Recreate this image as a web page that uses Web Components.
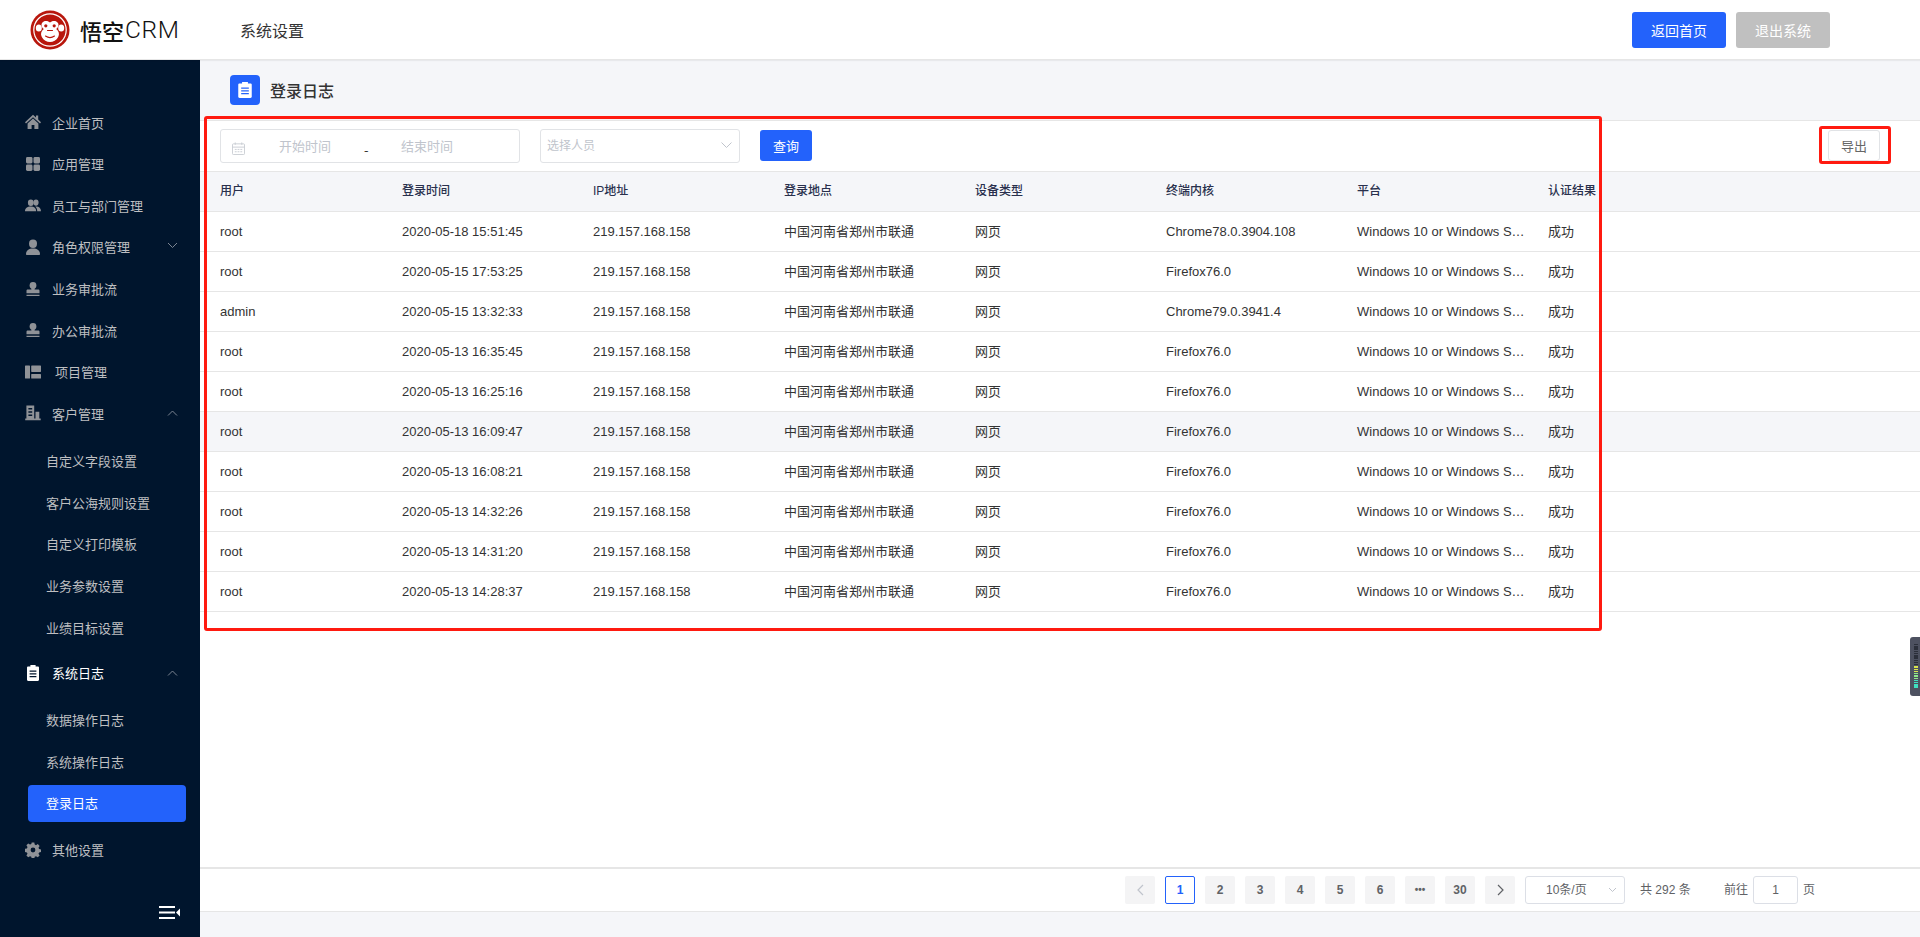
<!DOCTYPE html>
<html lang="zh">
<head>
<meta charset="utf-8">
<title>登录日志</title>
<style>
  html, body { margin: 0; height: 100%; }
  body { font-family: "Liberation Sans", "Noto Sans CJK SC", sans-serif; color: #333; background: #f5f6f9; overflow: hidden; }
</style>
</head>
<body>
<crm-app></crm-app>
<script>
const ICONS = {
  home: '<path d="M8 .8 0 8.200 1 9.400 8 3.200 15 9.400 16 8.200 13.200 5.600V1.600h-2.200v2zM2.600 9.400V15h4V11h2.800v4h4V9.400L8 4.600z"/>',
  grid: '<rect x="1" y="1" width="6.500" height="6.500" rx="1.400"/><rect x="8.500" y="1" width="6.500" height="6.500" rx="1.400"/><rect x="1" y="8.500" width="6.500" height="6.500" rx="1.400"/><rect x="8.500" y="8.500" width="6.500" height="6.500" rx="1.400"/>',
  users: '<ellipse cx="5.800" cy="5.800" rx="2.900" ry="3.300"/><ellipse cx="11" cy="5.600" rx="2.600" ry="3.100"/><path d="M0 14.200c0-3 2.200-4.800 5.800-4.800s5.400 1.800 5.400 4.800zM12.200 14.200c0-1.900-.7-3.500-2-4.600 3.400-.6 5.800 1.500 5.800 4.600z"/>',
  user: '<ellipse cx="8" cy="4.800" rx="4" ry="4.200"/><path d="M1 15c0-3.700 2.900-5.600 7-5.600s7 1.900 7 5.600c0 .6-.4 1-1 1H2c-.6 0-1-.4-1-1z"/>',
  stamp: '<circle cx="8" cy="4.400" r="3.400"/><path d="M6.400 7h3.200v1.400h3.600c.8 0 1.300.5 1.300 1.300v2.500H1.500V9.700c0-.8.5-1.300 1.300-1.300h3.600zM1.500 13.800h13v1.300h-13z"/>',
  project: '<rect x="0" y="1.500" width="5" height="13" rx=".6"/><rect x="6.200" y="1.500" width="9.800" height="6.400" rx=".6"/><rect x="6.200" y="10" width="9.800" height="4.500" rx=".6"/>',
  build: '<path fill-rule="evenodd" d="M1.400 .6h7.800v12.800h1.300V6.800h3.800v6.600h1.400v1.800H.2v-1.800h1.200zM3.400 3v1.500h3.800V3zM3.400 6.200v1.500h3.800V6.200zM3.400 9.400v1.500h3.800V9.400z"/>',
  clip: '<path fill-rule="evenodd" d="M5.400 0h5.200v1.400h2.200c.7 0 1.200.5 1.200 1.200v12.200c0 .7-.5 1.200-1.200 1.200H3.200c-.7 0-1.200-.5-1.200-1.200V2.600c0-.7.5-1.200 1.200-1.200h2.200zM4.600 5.400v1.300h6.800V5.400zM4.600 8.200v1.300h6.800V8.200zM4.600 11v1.300h6.800V11z"/>',
  gear: '<path fill-rule="evenodd" d="M6.700.6h2.600l.4 2 1.300.6 1.800-1.100 1.800 1.800-1.100 1.800.6 1.300 2 .4v2.600l-2 .4-.6 1.300 1.100 1.800-1.800 1.800-1.800-1.100-1.300.6-.4 2H6.700l-.4-2-1.300-.6-1.800 1.100-1.800-1.800 1.100-1.800-.6-1.300-2-.4V6.800l2-.4.6-1.300-1.100-1.800 1.800-1.800 1.800 1.100 1.300-.6zM8 5.600a2.400 2.400 0 1 0 0 4.800 2.400 2.400 0 0 0 0-4.800z"/>'
};

const ROWS = [
  ['root', '2020-05-18 15:51:45', 'Chrome78.0.3904.108'],
  ['root', '2020-05-15 17:53:25', 'Firefox76.0'],
  ['admin', '2020-05-15 13:32:33', 'Chrome79.0.3941.4'],
  ['root', '2020-05-13 16:35:45', 'Firefox76.0'],
  ['root', '2020-05-13 16:25:16', 'Firefox76.0'],
  ['root', '2020-05-13 16:09:47', 'Firefox76.0'],
  ['root', '2020-05-13 16:08:21', 'Firefox76.0'],
  ['root', '2020-05-13 14:32:26', 'Firefox76.0'],
  ['root', '2020-05-13 14:31:20', 'Firefox76.0'],
  ['root', '2020-05-13 14:28:37', 'Firefox76.0']
];

class BaseEl extends HTMLElement {
  constructor() {
    super();
    this.attachShadow({ mode: 'open' });
  }
  connectedCallback() {
    this.shadowRoot.innerHTML = this.render();
  }
}

class CrmApp extends BaseEl {
  render() {
    return `
      <style>
        :host { display: flex; flex-direction: column; height: 937px; position: relative; }
        .body { flex: 1; display: flex; min-height: 0; }
        main { flex: 1; min-width: 0; display: flex; flex-direction: column; }
      </style>
      <crm-header></crm-header>
      <div class="body">
        <crm-sidebar></crm-sidebar>
        <main>
          <crm-title>登录日志</crm-title>
          <log-panel></log-panel>
        </main>
      </div>
      <red-box style="left:204px;top:116px;width:1398px;height:515px"></red-box>
      <red-box style="left:1819px;top:126px;width:72px;height:38px"></red-box>
      <side-meter></side-meter>
    `;
  }
}

class CrmHeader extends BaseEl {
  render() {
    return `
      <style>
        :host { display: flex; align-items: center; height: 60px; box-sizing: border-box; background: #fff; border-bottom: 1px solid #e6e6e6; box-shadow: 0 1px 1px rgba(0,0,0,.05); position: relative; z-index: 2; }
        .logo { display: flex; align-items: center; margin-left: 30px; width: 210px; }
        .brand { font: 500 22px "Noto Sans CJK SC", sans-serif; color: #111; white-space: nowrap; display: flex; align-items: center; }
        .brand b { font: 300 24.500px "Roboto", sans-serif; margin-left: 1px; letter-spacing: .6px; color: #111; }
        .name { font-size: 16px; color: #333; font-family: "Noto Sans CJK SC", sans-serif; }
        .btns { margin-left: auto; margin-right: 90px; display: flex; gap: 10px; }
        button { width: 94px; height: 36px; border: 0; border-radius: 3px; background: #2362fb; color: #fff; font: 14px "Noto Sans CJK SC", sans-serif; padding: 0; }
        button.off { background: #c0c0c0; }
        svg { display: block; flex: none; margin-right: 10px; }
      </style>
      <div class="logo">
        <svg width="40" height="40" viewBox="0 0 40 40">
          <circle cx="20" cy="20" r="19.500" fill="#b8160c"/>
          <circle cx="20" cy="20" r="16.800" fill="#fff"/>
          <circle cx="20" cy="20" r="15.600" fill="#b8160c"/>
          <ellipse cx="8.800" cy="18" rx="3" ry="3.600" fill="#fff"/>
          <ellipse cx="31.200" cy="18" rx="3" ry="3.600" fill="#fff"/>
          <path d="M20 12.500c1.700-2 6.300-2.500 8 .5 1.300 2.400-.2 5-1.800 6 2.800 2 3.500 5 2 8-1.700 3.300-5 5-8.200 5s-6.500-1.700-8.200-5c-1.500-3-.8-6 2-8-1.600-1-3.100-3.600-1.800-6 1.700-3 6.300-2.500 8-.5z" fill="#fff"/>
          <circle cx="15.800" cy="15.800" r="1.600" fill="#b8160c"/>
          <circle cx="24.200" cy="15.800" r="1.600" fill="#b8160c"/>
          <path d="M17.500 20.500h5M15.500 26c2.800 2 6.200 2 9 0" fill="none" stroke="#b8160c" stroke-width="1.100" stroke-linecap="round"/>
        </svg>
        <span class="brand">悟空<b>CRM</b></span>
      </div>
      <span class="name">系统设置</span>
      <div class="btns">
        <button>返回首页</button>
        <button class="off">退出系统</button>
      </div>
    `;
  }
}

class CrmSidebar extends BaseEl {
  render() {
    return `
      <style>
        :host { display: flex; flex-direction: column; flex: none; width: 200px; background: #00152d; position: relative; padding-top: 44px; box-sizing: border-box; font-family: "Noto Sans CJK SC", sans-serif; }
        nav { display: flex; flex-direction: column; gap: 4.650px; }
        .sub { display: flex; flex-direction: column; gap: 4.650px; margin: 5.500px 0 4px; }
        .sub.two { margin: 5.200px 0 5px; }
        .toggle { position: absolute; left: 159px; bottom: 18px; display: block; }
      </style>
      <nav>
        <nav-item icon="home">企业首页</nav-item>
        <nav-item icon="grid">应用管理</nav-item>
        <nav-item icon="users">员工与部门管理</nav-item>
        <nav-item icon="user" arrow="down">角色权限管理</nav-item>
        <nav-item icon="stamp">业务审批流</nav-item>
        <nav-item icon="stamp">办公审批流</nav-item>
        <nav-item icon="project" wide>项目管理</nav-item>
        <nav-item icon="build" arrow="up">客户管理</nav-item>
        <div class="sub">
          <nav-item sub>自定义字段设置</nav-item>
          <nav-item sub>客户公海规则设置</nav-item>
          <nav-item sub>自定义打印模板</nav-item>
          <nav-item sub>业务参数设置</nav-item>
          <nav-item sub>业绩目标设置</nav-item>
        </div>
        <nav-item icon="clip" arrow="up" open>系统日志</nav-item>
        <div class="sub two">
          <nav-item sub>数据操作日志</nav-item>
          <nav-item sub>系统操作日志</nav-item>
          <nav-item sub active>登录日志</nav-item>
        </div>
        <nav-item icon="gear">其他设置</nav-item>
      </nav>
      <svg class="toggle" width="22" height="13" viewBox="0 0 22 13" fill="#fff">
        <rect x="0" y="0" width="16" height="2"/><rect x="0" y="5.500" width="16" height="2"/><rect x="0" y="11" width="16" height="2"/>
        <path d="M21 2.500v8L17 6.500z"/>
      </svg>
    `;
  }
}

class NavItem extends BaseEl {
  render() {
    const icon = this.getAttribute('icon');
    const arrow = this.getAttribute('arrow');
    let iconHtml = '';
    if (icon) {
      iconHtml = `<svg class="ic" width="16" height="16" viewBox="0 0 16 16" fill="currentColor">${ICONS[icon]}</svg>`;
    }
    let arrowHtml = '';
    if (arrow) {
      const d = arrow === 'down' ? 'M1 1l4.500 4.500L10 1' : 'M1 5.500L5.500 1 10 5.500';
      arrowHtml = `<svg class="ar ${arrow}" width="11" height="7" viewBox="0 0 11 7" fill="none" stroke="#7c8592" stroke-width="1"><path d="${d}"/></svg>`;
    }
    return `
      <style>
        :host { display: flex; align-items: center; height: 37px; box-sizing: border-box; padding-bottom: 1px; margin: 0 14px 0 28px; border-radius: 4px; font-size: 13px; color: #bebfc1; position: relative; }
        :host([sub]) { padding-left: 18px; }
        :host([active]) { background: #2362fb; color: #fff; }
        :host([open]) { color: #fff; }
        .ic { margin-left: -3px; margin-right: 11px; color: #8f9297; flex: none; }
        :host([open]) .ic { color: #fff; }
        :host([wide]) .ic { margin-right: 14px; }
        .ar { position: absolute; right: 8px; top: 15px; }
        .ar.down { top: 13px; }
      </style>
      ${iconHtml}<slot></slot>${arrowHtml}
    `;
  }
}

class CrmTitle extends BaseEl {
  render() {
    return `
      <style>
        :host { display: flex; align-items: center; flex: none; height: 60px; padding-left: 30px; font: 500 16px "Noto Sans CJK SC", sans-serif; color: #333; }
        .ic { width: 30px; height: 30px; border-radius: 4px; background: #2362fb; margin-right: 10px; display: flex; align-items: center; justify-content: center; color: #fff; }
      </style>
      <span class="ic"><svg width="18" height="16" viewBox="0 0 16 16" preserveAspectRatio="none" fill="currentColor">${ICONS.clip}</svg></span>
      <slot></slot>
    `;
  }
}

class LogPanel extends BaseEl {
  render() {
    return `
      <style>
        :host { flex: 1; min-height: 0; display: flex; flex-direction: column; background: #fff; border-top: 1px solid #e6e6e6; margin-bottom: 25px; border-bottom: 1px solid #e6e6e6; }
        .grow { flex: 1; }
      </style>
      <log-toolbar></log-toolbar>
      <log-table></log-table>
      <div class="grow"></div>
      <log-pager></log-pager>
    `;
  }
}

class LogToolbar extends BaseEl {
  render() {
    return `
      <style>
        :host { display: flex; align-items: center; flex: none; height: 51px; box-sizing: border-box; padding: 0 40px 1px 20px; border-bottom: 1px solid #e6e6e6; font: 13px "Noto Sans CJK SC", sans-serif; }
        .date { display: flex; align-items: center; width: 300px; height: 34px; box-sizing: border-box; border: 1px solid #e1e3e6; border-radius: 3px; color: #c0c4cc; position: relative; }
        .date svg { margin: 6px 0 0 11px; }
        .date .a { position: absolute; left: 58px; }
        .date .b { position: absolute; left: 180px; }
        .date .dash { position: absolute; left: 143px; color: #333; top: 10px; }
        .sel { display: flex; align-items: center; justify-content: space-between; width: 200px; height: 34px; box-sizing: border-box; margin-left: 20px; padding: 0 7px 2px 6px; border: 1px solid #e1e3e6; border-radius: 3px; color: #c0c4cc; font-size: 12px; }
        .sel svg { margin-top: 2px; }
        .go { margin-left: 20px; width: 52px; height: 31px; border: 0; border-radius: 3px; background: #2362fb; color: #fff; font: 13px "Noto Sans CJK SC", sans-serif; padding: 0; }
        .exp { margin-left: auto; width: 52px; height: 31px; border: 1px solid #e1e3e6; border-radius: 3px; background: #fff; color: #666; font: 13px "Noto Sans CJK SC", sans-serif; padding: 0; }
      </style>
      <div class="date">
        <svg width="13" height="13" viewBox="0 0 14 14" fill="none" stroke="#c8ccd3" stroke-width="1"><rect x=".5" y="2" width="13" height="11.500" rx="1"/><path d="M.5 5.500h13M3.500 .5v2.500M10.500 .5v2.500M3 8h2M6 8h2M9 8h2M3 10.500h2M6 10.500h2M9 10.500h2"/></svg>
        <span class="a">开始时间</span>
        <span class="dash">-</span>
        <span class="b">结束时间</span>
      </div>
      <div class="sel">
        <span>选择人员</span>
        <svg width="11" height="7" viewBox="0 0 11 7" fill="none" stroke="#c0c4cc" stroke-width="1"><path d="M.5 .5l5 5 5-5"/></svg>
      </div>
      <button class="go">查询</button>
      <button class="exp">导出</button>
    `;
  }
}

class LogTable extends BaseEl {
  render() {
    const heads = ['用户', '登录时间', 'IP地址', '登录地点', '设备类型', '终端内核', '平台', '认证结果'];
    const rows = ROWS.map((r, i) => `
      <div class="row${i === 5 ? ' hover' : ''}">
        <span>${r[0]}</span><span>${r[1]}</span><span>219.157.168.158</span><span>中国河南省郑州市联通</span><span>网页</span><span>${r[2]}</span><span>Windows 10 or Windows S…</span><span>成功</span>
      </div>`).join('');
    return `
      <style>
        :host { display: block; flex: none; font-size: 13px; color: #333; }
        .row { display: grid; grid-template-columns: 182px repeat(7, 191px); height: 40px; padding-left: 20px; box-sizing: border-box; align-items: center; border-bottom: 1px solid #e6e6e6; }
        .row span { white-space: nowrap; line-height: 18px; font-family: "Liberation Sans", "Noto Sans CJK SC", sans-serif; }
        .head { background: #f5f6f9; font-weight: 500; font-size: 12px; color: #29304d; padding-bottom: 2px; }
        .hover { background: #f5f6f9; }
      </style>
      <div class="row head">${heads.map(h => `<span>${h}</span>`).join('')}</div>
      ${rows}
    `;
  }
}

class LogPager extends BaseEl {
  render() {
    const pages = ['1', '2', '3', '4', '5', '6', '•••', '30'];
    return `
      <style>
        :host { display: flex; align-items: center; flex: none; height: 44px; box-sizing: border-box; padding-left: 925px; border-top: 2px solid #e6e6e6; font: 12px/18px "Liberation Sans", "Noto Sans CJK SC", sans-serif; color: #606266; }
        .p { display: flex; align-items: center; justify-content: center; width: 30px; height: 28px; margin-right: 10px; border-radius: 2px; background: #f4f4f5; font-weight: 700; box-sizing: border-box; }
        .p.on { background: #fff; border: 1px solid #2362fb; color: #2362fb; }
        .p.more { font-size: 10px; }
        .sel { display: flex; align-items: center; justify-content: space-between; width: 100px; height: 28px; box-sizing: border-box; border: 1px solid #dcdfe6; border-radius: 3px; padding: 0 7px 0 20px; }
        .total { margin-left: 15px; width: 84px; }
        .num { display: flex; align-items: center; justify-content: center; width: 45px; height: 28px; box-sizing: border-box; border: 1px solid #dcdfe6; border-radius: 3px; margin: 0 5px; }
      </style>
      <span class="p"><svg width="7" height="12" viewBox="0 0 7 12" fill="none" stroke="#c0c4cc" stroke-width="1.200"><path d="M6 1L1 6l5 5"/></svg></span>
      ${pages.map((p, i) => `<span class="p${i === 0 ? ' on' : ''}${p.length > 2 ? ' more' : ''}">${p}</span>`).join('')}
      <span class="p"><svg width="7" height="12" viewBox="0 0 7 12" fill="none" stroke="#606266" stroke-width="1.200"><path d="M1 1l5 5-5 5"/></svg></span>
      <span class="sel">10条/页<svg width="9" height="6" viewBox="0 0 9 6" fill="none" stroke="#c0c4cc"><path d="M1 1l3.500 3.500L8 1"/></svg></span>
      <span class="total">共 292 条</span>
      <span>前往</span><span class="num">1</span><span>页</span>
    `;
  }
}

class RedBox extends BaseEl {
  render() {
    return `<style>:host { position: absolute; display: block; box-sizing: border-box; border: 3px solid #ff1a10; border-radius: 3px; pointer-events: none; z-index: 5; }</style>`;
  }
}

class SideMeter extends BaseEl {
  render() {
    const bars = [];
    for (let i = 0; i < 20; i++) {
      const c = i < 10 ? '#2b2f3a' : i < 13 ? '#d8e34e' : i < 16 ? '#8fe88a' : '#3fe0c0';
      bars.push(`<i style="background:${c}"></i>`);
    }
    return `
      <style>
        :host { position: absolute; right: 0; top: 637px; width: 10px; height: 59px; box-sizing: border-box; background: #4d5160; border-radius: 3px 0 0 3px; padding: 7px 2px 0 4px; display: flex; flex-direction: column; gap: .9px; z-index: 5; }
        i { display: block; height: 1.350px; flex: none; }
      </style>
      ${bars.join('')}
    `;
  }
}

customElements.define('crm-app', CrmApp);
customElements.define('crm-header', CrmHeader);
customElements.define('crm-sidebar', CrmSidebar);
customElements.define('nav-item', NavItem);
customElements.define('crm-title', CrmTitle);
customElements.define('log-panel', LogPanel);
customElements.define('log-toolbar', LogToolbar);
customElements.define('log-table', LogTable);
customElements.define('log-pager', LogPager);
customElements.define('red-box', RedBox);
customElements.define('side-meter', SideMeter);
</script>
</body>
</html>
